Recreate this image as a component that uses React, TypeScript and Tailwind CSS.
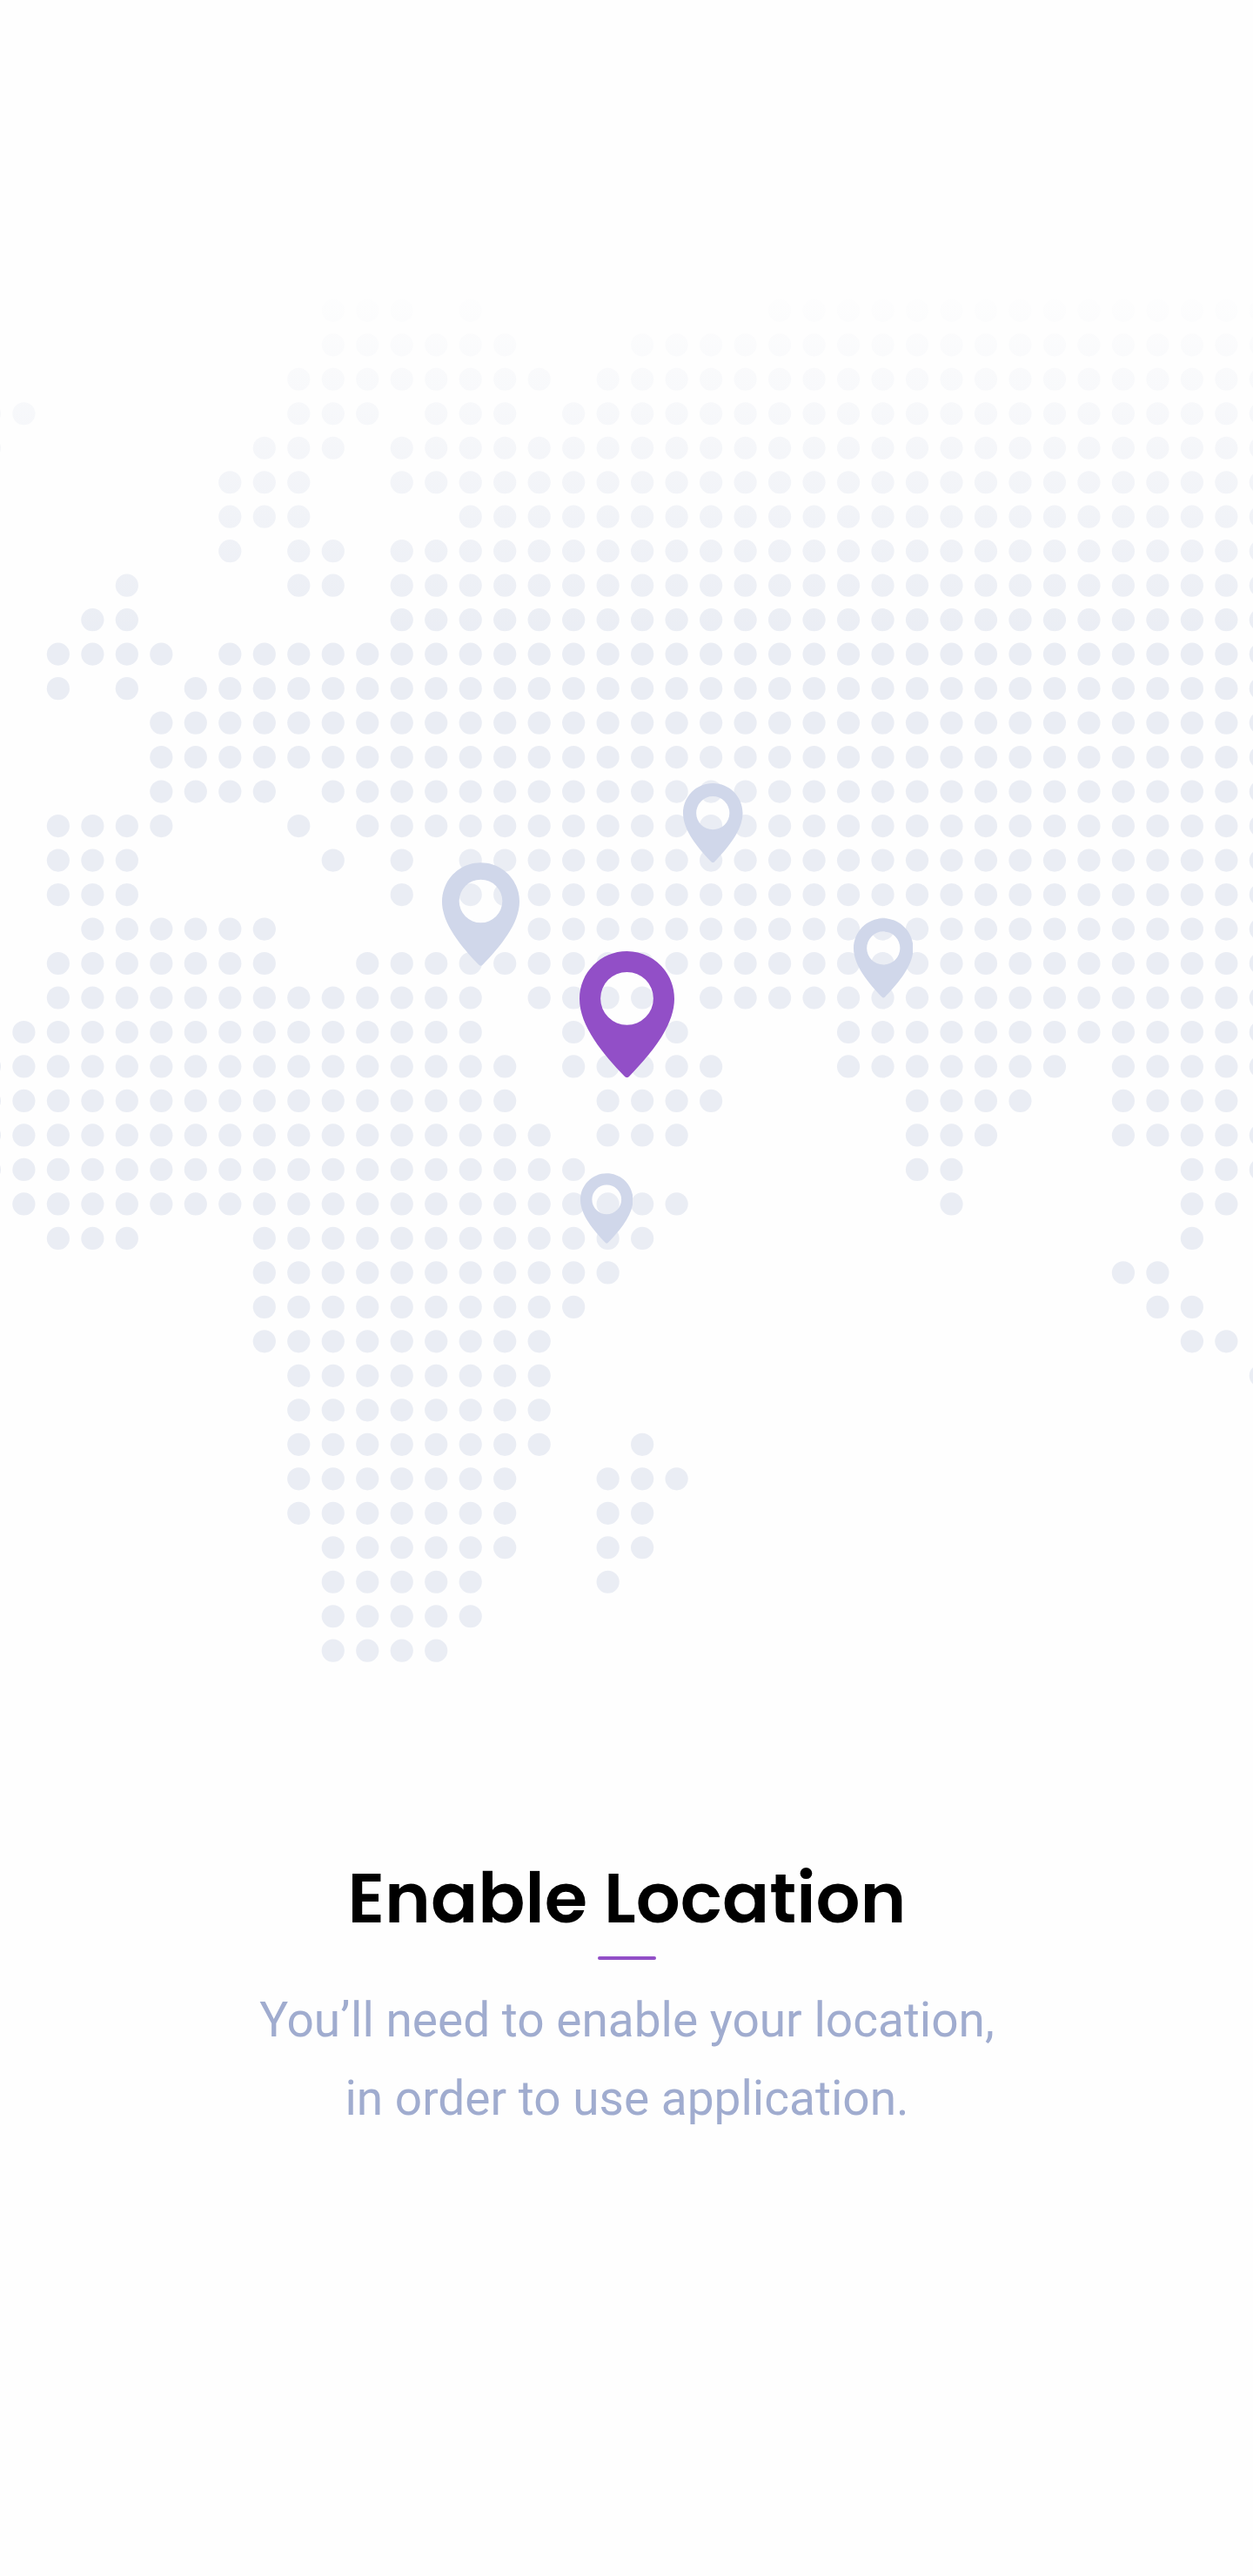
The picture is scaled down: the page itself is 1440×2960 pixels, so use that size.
type Range = [number, number];

const PITCH = 39.485;
const ORIGIN_X = 27.4;
const ORIGIN_Y = 56.8;
const RADIUS = 13.1;

// Land areas of the map: each entry is one row of dots, as inclusive column ranges.
const ROWS: Range[][] = [
  [[9, 11], [13, 13], [22, 36]],
  [[9, 14], [18, 36]],
  [[8, 15], [17, 36]],
  [[-1, 0], [8, 10], [12, 14], [16, 36]],
  [[-1, -1], [7, 9], [11, 36]],
  [[6, 8], [11, 36]],
  [[6, 8], [13, 36]],
  [[6, 6], [8, 9], [11, 36]],
  [[3, 3], [8, 9], [11, 36]],
  [[2, 3], [11, 36]],
  [[1, 4], [6, 36]],
  [[1, 1], [3, 3], [5, 36]],
  [[4, 36]],
  [[4, 36]],
  [[4, 7], [9, 36]],
  [[1, 4], [8, 8], [10, 36]],
  [[1, 3], [9, 9], [11, 11], [13, 36]],
  [[1, 3], [11, 11], [13, 36]],
  [[2, 7], [15, 36]],
  [[1, 7], [10, 36]],
  [[1, 13], [15, 18], [20, 36]],
  [[0, 13], [16, 16], [19, 19], [24, 36]],
  [[-1, 14], [16, 20], [24, 30], [32, 36]],
  [[-1, 14], [17, 20], [26, 29], [32, 35]],
  [[-1, 15], [17, 19], [26, 28], [32, 36]],
  [[-1, 16], [26, 27], [34, 36]],
  [[0, 19], [27, 27], [34, 35]],
  [[1, 3], [7, 18], [34, 34]],
  [[7, 17], [32, 33]],
  [[7, 16], [33, 34]],
  [[7, 15], [34, 35]],
  [[8, 15], [36, 36]],
  [[8, 15]],
  [[8, 15], [18, 18]],
  [[8, 14], [17, 19]],
  [[8, 14], [17, 18]],
  [[9, 14], [17, 18]],
  [[9, 13], [17, 17]],
  [[9, 13]],
  [[9, 12]],
];

const DOTS = ROWS.flatMap((ranges, row) =>
  ranges.flatMap(([from, to]) =>
    Array.from({ length: to - from + 1 }, (_, i) => ({
      key: `${row}:${from + i}`,
      cx: ORIGIN_X + (from + i) * PITCH,
      cy: ORIGIN_Y + row * PITCH,
    })),
  ),
);

function DotMap() {
  return (
    <svg className="block h-[1640px] w-[1440px]" viewBox="0 0 1440 1640" aria-hidden="true">
      <defs>
        <linearGradient id="fade" gradientUnits="userSpaceOnUse" x1="0" y1="25" x2="0" y2="440">
          <stop offset="0" stopColor="#eaedf4" stopOpacity="0" />
          <stop offset="1" stopColor="#eaedf4" />
        </linearGradient>
      </defs>
      <g fill="url(#fade)">
        {DOTS.map((d) => (
          <circle key={d.key} cx={d.cx} cy={d.cy} r={RADIUS} />
        ))}
      </g>
    </svg>
  );
}

function Pin({ className }: { className: string }) {
  return (
    <svg className={`absolute ${className}`} viewBox="0 0 109 145.3" fill="currentColor" aria-hidden="true">
      <path
        fillRule="evenodd"
        d="M54.5 0C84.6 0 109 24.4 109 54.8C109 86 82 118 57 144Q54.5 146.4 52 144C27 118 0 86 0 54.8C0 24.4 24.4 0 54.5 0ZM54.5 23.9A30.4 30.4 0 1 0 54.5 84.7A30.4 30.4 0 1 0 54.5 23.9Z"
      />
    </svg>
  );
}

export default function App() {
  return (
    <main className="flex h-[2960px] w-[1440px] flex-col items-center overflow-hidden bg-[#fefefe] pt-[300px]">
      <section className="relative h-[1640px] w-full overflow-hidden">
        <DotMap />
        <Pin className="left-[508px] top-[691px] h-[119px] w-[89px] text-[#d0d7ea]" />
        <Pin className="left-[785px] top-[599.5px] h-[91.5px] w-[68.5px] text-[#d0d7ea]" />
        <Pin className="left-[980.5px] top-[755px] h-[92px] w-[68.5px] text-[#d0d7ea]" />
        <Pin className="left-[666.5px] top-[1048px] h-[81px] w-[60.5px] text-[#d0d7ea]" />
        <Pin className="left-[666px] top-[793px] h-[145.3px] w-[109px] text-[#924fc7]" />
      </section>

      <section className="flex flex-col items-center pl-px pt-[191px] text-center">
        <h1 className="whitespace-nowrap font-['Poppins','Inter',sans-serif] text-[80px] font-semibold leading-[100px] text-black">
          Enable Location
        </h1>
        <div className="mt-[17px] h-1 w-[67px] rounded-full bg-[#924fc7]" />
        <p className="mt-6 whitespace-nowrap font-['Roboto',sans-serif] text-[55px] leading-[90px] text-[#a0accf]">
          You’ll need to enable your location,
          <br />
          in order to use application.
        </p>
      </section>
    </main>
  );
}
